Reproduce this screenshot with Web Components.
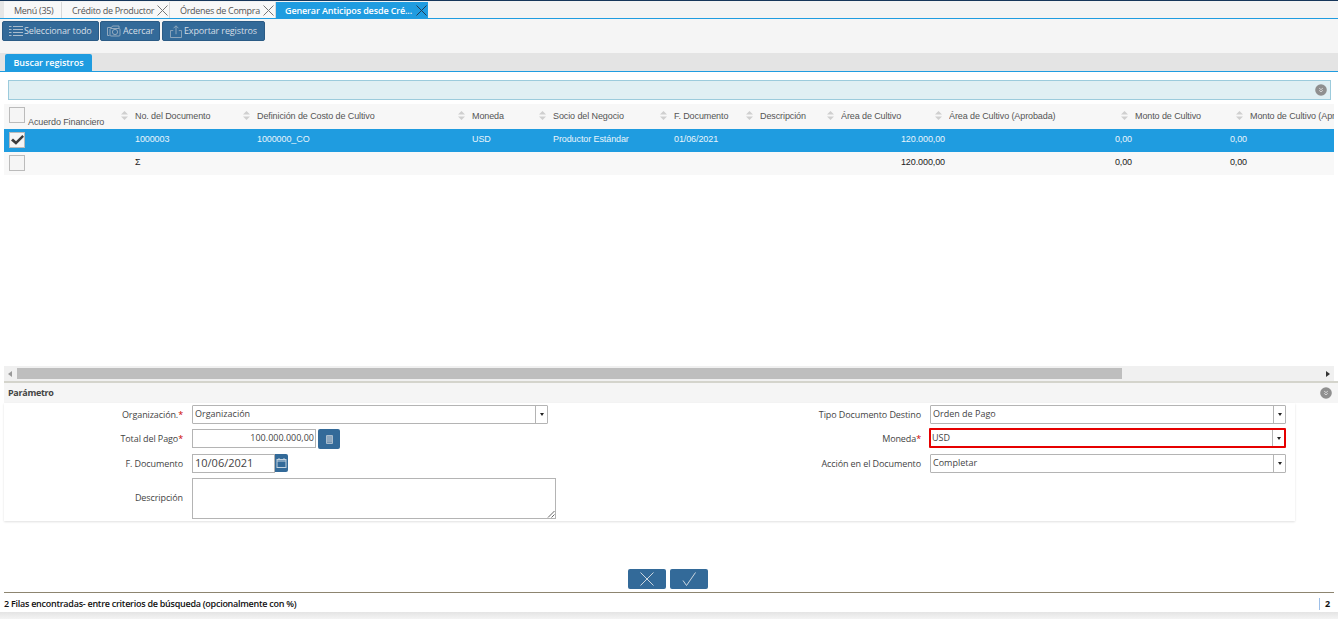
<!DOCTYPE html>
<html lang="es">
<head>
<meta charset="utf-8">
<title>Generar Anticipos</title>
<style>
  html, body { margin: 0; height: 100%; overflow: hidden; background: #fff; }
  body { font-family: "Open Sans", "Liberation Sans", sans-serif; font-size: 9px; color: #333; }
</style>
</head>
<body>
<app-shell>
  <tab-bar>
    <app-tab style="--w:58px">Menú (35)</app-tab>
    <app-tab closable style="--w:108px">Crédito de Productor</app-tab>
    <app-tab closable style="--w:106px">Órdenes de Compra</app-tab>
    <app-tab closable active style="--w:152px">Generar Anticipos desde Cré...</app-tab>
  </tab-bar>
  <tool-bar>
    <tool-button icon="list" style="--w:97px">Seleccionar todo</tool-button>
    <tool-button icon="zoom" style="--w:60px">Acercar</tool-button>
    <tool-button icon="export" style="--w:103px">Exportar registros</tool-button>
  </tool-bar>
  <sub-tabs>Buscar registros</sub-tabs>
  <info-bar></info-bar>
  <data-grid></data-grid>
  <grid-scroll></grid-scroll>
  <param-panel>
    <form-field label="Organización." required style="--lw:179px"><combo-box value="Organización" style="--fw:356px"></combo-box></form-field>
    <form-field label="Tipo Documento Destino" style="--lw:281px"><combo-box value="Orden de Pago" style="--fw:356px"></combo-box></form-field>
    <form-field label="Total del Pago" required style="--lw:179px"><number-box value="100.000.000,00"></number-box></form-field>
    <form-field label="Moneda" required style="--lw:281px"><combo-box value="USD" error style="--fw:356px"></combo-box></form-field>
    <form-field label="F. Documento" style="--lw:179px"><date-box value="10/06/2021"></date-box></form-field>
    <form-field label="Acción en el Documento" style="--lw:281px"><combo-box value="Completar" style="--fw:356px"></combo-box></form-field>
    <form-field label="Descripción" tall style="--lw:179px"><memo-box></memo-box></form-field>
  </param-panel>
  <action-bar></action-bar>
  <status-bar count="2">2 Filas encontradas- entre criterios de búsqueda (opcionalmente con %)</status-bar>
</app-shell>

<script>
const FONT = `"Open Sans", "Liberation Sans", sans-serif`;
const GRID_FONT = `"Liberation Sans", Arial, sans-serif`;

function define(name, css, html) {
  customElements.define(name, class extends HTMLElement {
    constructor() {
      super();
      this.attachShadow({ mode: "open" });
    }
    connectedCallback() {
      const body = typeof html === "function" ? html(this) : html;
      this.shadowRoot.innerHTML = `<style>${css}</style>${body}`;
    }
  });
}

const closeIcon = `<svg width="11" height="11" viewBox="0 0 11 11"><path d="M.5.5l10 10M10.500.5l-10 10" stroke="currentColor" fill="none"/></svg>`;
const collapseDot = `<svg width="12" height="12" viewBox="0 0 12 12"><circle cx="6" cy="6" r="5.800" fill="#8f8f8f"/><path d="M4.200 4.200L6 5.600l1.800-1.400M4.200 6.400L6 7.800l1.800-1.400" stroke="#d8d8d8" fill="none"/></svg>`;

define("app-shell", `
  :host { display: flex; flex-direction: column; height: 619px; width: 1338px; overflow: hidden; border-top: 1px solid #16365a; box-sizing: border-box; }
`, `<slot></slot>`);

define("tab-bar", `
  :host { display: flex; padding: 1px 0 0 4px; box-sizing: border-box; background: #f3f3f3; border-bottom: 1px solid #1f9ce0; height: 18px; flex: none; box-shadow: inset 4px 0 0 #e6e6e6; }
`, `<slot></slot>`);

define("app-tab", `
  :host { display: flex; align-items: center; width: var(--w); box-sizing: border-box; padding: 0 1px 0 10px; justify-content: space-between; background: #f8f8f8; border-right: 1px solid #d8d8d8; color: #555; font: 9px ${FONT}; letter-spacing: -.3px; white-space: nowrap; }
  :host([active]) { background: #1f9ce0; color: #fff; font-weight: 600; border-right: 0; padding-left: 9px; letter-spacing: -.13px; }
  svg { display: block; color: #777; }
  :host([active]) svg { color: #223c55; }
`, el => `<span><slot></slot></span>${el.hasAttribute("closable") ? closeIcon : ""}`);

define("tool-bar", `
  :host { display: flex; gap: 1px; height: 34px; box-sizing: border-box; padding: 2px 0 0 2px; background: #f5f5f5; flex: none; }
  ::slotted(:last-child) { margin-left: 1px; }
`, `<slot></slot>`);

const toolIcons = {
  list: `<svg width="14" height="12" viewBox="0 0 14 12" fill="none" stroke="#a9bccd"><path d="M4 1.500h10M4 4.500h10M4 7.500h10M4 10.500h10M0 1.500h2.500M0 4.500h2.500M0 7.500h2.500M0 10.500h2.500"/></svg>`,
  zoom: `<svg width="14" height="12" viewBox="0 0 14 12" fill="none" stroke="#92a9be"><path d="M.5 10.500V2.500h4l1-1.500h6.500v2M.5 10.500h2"/><rect x="3" y="3.500" width="10" height="7.500" rx="1"/><circle cx="8" cy="7" r="2.600"/></svg>`,
  export: `<svg width="12" height="13" viewBox="0 0 13 14" fill="none" stroke="#92a9be"><path d="M3.500 6H.5v7.500h12V6h-3M6.500 10V1M3.800 3.500L6.500.8l2.700 2.700"/></svg>`
};

define("tool-button", `
  :host { display: flex; align-items: center; gap: 1px; width: var(--w); height: 20px; box-sizing: border-box; padding-left: 6px; border-radius: 2px; background: #336a99; border: 1px solid #2b5b85; color: #d5dee6; font: 9px ${FONT}; letter-spacing: -.13px; white-space: nowrap; }
  :host([icon="zoom"]) { gap: 2px; }
  :host([icon="export"]) { gap: 2px; padding-left: 7px; }
  span { position: relative; top: -1px; }
  svg { display: block; flex: none; }
`, el => `${toolIcons[el.getAttribute("icon")]}<span><slot></slot></span>`);

define("sub-tabs", `
  :host { display: flex; height: 19px; padding: 1px 0 0 5px; box-sizing: border-box; background: #e4e4e4; border-bottom: 1px solid #1f9ce0; flex: none; }
  span { display: flex; align-items: center; justify-content: center; width: 87px; background: #1f9ce0; color: #fff; font: 600 9px ${FONT}; border-radius: 2px 2px 0 0; }
`, `<span><slot></slot></span>`);

define("info-bar", `
  :host { display: flex; align-items: center; justify-content: flex-end; height: 20px; margin: 8px 7px 4px 8px; padding-right: 3px; box-sizing: border-box; background: #e0eff3; border: 1px solid #9ccbdc; flex: none; }
  svg { display: block; }
`, collapseDot);

const COLS = [131, 122, 215, 81, 121, 86, 81, 108, 186, 115, 84];
const HEADS = ["Acuerdo Financiero", "No. del Documento", "Definición de Costo de Cultivo", "Moneda", "Socio del Negocio", "F. Documento", "Descripción", "Área de Cultivo", "Área de Cultivo (Aprobada)", "Monto de Cultivo", "Monto de Cultivo (Aprobado)"];
const ROWS = [
  ["", "1000003", "1000000_CO", "USD", "Productor Estándar", "01/06/2021", "", "120.000,00", "0,00", "0,00", ""],
  ["", "Σ", "", "", "", "", "", "120.000,00", "0,00", "0,00", ""]
];
const NUM_FROM = 7;
const sortIcon = `<svg class="sort" width="7" height="9" viewBox="0 0 7 9"><path d="M3.500 0L7 3.500H0zM3.500 9L0 5.500h7z" fill="#cfcfcf"/></svg>`;
const checkMark = `<svg width="16" height="16" viewBox="0 0 16 16"><path d="M2 8.500l2-2 3 2.800L13.300 3l1.700 1.800-8 8z" fill="#3b3b3b"/></svg>`;

define("data-grid", `
  :host { display: block; margin: 0 4px; height: 262px; overflow: hidden; flex: none; font: 9px ${GRID_FONT}; letter-spacing: -.1px; }
  .row { display: grid; grid-template-columns: ${COLS.map(c => c + "px").join(" ")}; align-items: center; width: max-content; }
  .head { height: 25px; background: #f7f7f7; color: #555; }
  .head div { display: flex; align-items: center; justify-content: space-between; padding-right: 7px; padding-bottom: 2px; box-sizing: border-box; height: 100%; white-space: nowrap; overflow: hidden; }
  .head div:last-child { overflow: visible; padding-right: 0; }
  .head .first { position: relative; }
  .head .first b { font-weight: 400; position: absolute; left: 24px; top: 13px; }
  .head .first .box { position: absolute; left: 5px; top: 3px; margin: 0; }
  .head .first .sort { position: absolute; right: 7px; top: 7px; }
  .sel, .foot { height: 23px; }
  .sel { background: #1f9ce0; color: #e8f4fb; }
  .foot { background: #f8f8f8; color: #222; }
  .num { text-align: right; padding-right: 3px; }
  .num.wide { padding-right: 4px; }
  .cell { white-space: nowrap; padding-bottom: 3px; }
  .foot .cell { padding-bottom: 4px; }
  .box { display: block; width: 16px; height: 16px; box-sizing: border-box; border: 1px solid #bbb; background: #f5f5f5; margin: 0 0 1px 5px; }
  .box svg { display: block; margin: -1px; }
`, () => {
  const head = HEADS.map((h, i) => i === 0
    ? `<div class="first"><span class="box"></span><b>${h}</b>${sortIcon}</div>`
    : `<div><span>${h}</span>${i < HEADS.length - 1 ? sortIcon : ""}</div>`).join("");
  const row = (cells, cls, checked) => `<div class="row ${cls}">` + cells.map((c, i) => {
    if (i === 0) return `<span class="box">${checked ? checkMark : ""}</span>`;
    return `<span class="cell ${i >= NUM_FROM ? (i === NUM_FROM ? "num wide" : "num") : ""}">${c}</span>`;
  }).join("") + `</div>`;
  return `<div class="row head">${head}</div>${row(ROWS[0], "sel", true)}${row(ROWS[1], "foot", false)}`;
});

define("grid-scroll", `
  :host { display: flex; align-items: center; height: 15px; margin-left: 4px; margin-right: 4px; background: #f0f0f0; flex: none; }
  i { display: block; width: 0; height: 0; border: 3.500px solid transparent; flex: none; }
  .l { border-right: 4px solid #999; border-left: 0; margin: 0 5px 0 4px; }
  .r { border-left: 4px solid #333; border-right: 0; margin: 0 4px 0 auto; }
  .t { width: 1105px; height: 11px; background: #bebebe; flex: none; }
`, `<i class="l"></i><div class="t"></div><i class="r"></i>`);

define("param-panel", `
  :host { display: block; margin-left: 4px; flex: none; }
  header { display: flex; align-items: center; justify-content: space-between; height: 22px; box-sizing: border-box; padding: 0 6px 0 4px; background: #f5f5f5; border-top: 2px solid #d4d4cc; color: #444; font: 700 9px ${FONT}; letter-spacing: -.3px; }
  header span { position: relative; top: -1px; }
  svg { display: block; }
  .body { display: grid; grid-template-columns: 636px 655px; grid-template-rows: 24px 25px 24px 43px; width: 1291px; padding-top: 2px; box-sizing: border-box; box-shadow: 0 1px 2px rgba(0,0,0,.12); }
`, `<header><span>Parámetro</span>${collapseDot}</header><div class="body"><slot></slot></div>`);

define("form-field", `
  :host { display: flex; align-items: flex-start; gap: 9px; color: #444; font: 9px ${FONT}; letter-spacing: -.1px; }
  label { width: var(--lw); flex: none; text-align: right; line-height: 19px; white-space: nowrap; box-sizing: border-box; }
  :host([tall]) label { line-height: 39px; }
  em { color: #c00; font-style: normal; }
`, el => `<label>${el.getAttribute("label")}${el.hasAttribute("required") ? "<em>*</em>" : ""}</label><slot></slot>`);

define("combo-box", `
  :host { display: flex; width: var(--fw); height: 19px; box-sizing: border-box; background: #fff; border: 1px solid #b4b4b4; border-radius: 1px; color: #444; font: 9px ${FONT}; letter-spacing: 0; }
  :host([error]) { border: 2px solid #e60000; margin: -1px 0 0 -1px; width: calc(var(--fw) + 1px); height: 20px; }
  span { flex: 1; padding-left: 2px; line-height: 15px; }
  :host([error]) span { padding-left: 1px; }
  b { display: flex; align-items: center; justify-content: center; width: 11px; border-left: 1px solid #b4b4b4; }
  b::after { content: ""; border: 2.500px solid transparent; border-top: 3px solid #222; border-bottom: 0; }
`, el => `<span>${el.getAttribute("value")}</span><b></b>`);

define("number-box", `
  :host { display: flex; gap: 2px; height: 20px; font: 9px ${FONT}; color: #444; letter-spacing: 0; }
  span { width: 124px; height: 19px; box-sizing: border-box; border: 1px solid #b4b4b4; text-align: right; padding-right: 1px; line-height: 16px; }
  b { display: flex; align-items: center; justify-content: center; width: 22px; height: 20px; background: #336a99; border-radius: 2px; }
  svg { display: block; }
`, el => `<span>${el.getAttribute("value")}</span><b><svg width="7" height="9" viewBox="0 0 7 9"><rect width="7" height="9" rx="1" fill="#a9bccd"/><path d="M1 2h5M1 4h5M1 6h5M1 7.500h5" stroke="#5d83a5" stroke-width=".7"/></svg></b>`);

define("date-box", `
  :host { display: flex; height: 19px; font: 11px ${FONT}; color: #444; letter-spacing: 0; }
  span { width: 83px; height: 19px; box-sizing: border-box; border: 1px solid #b4b4b4; padding-left: 2px; line-height: 16px; }
  b { display: flex; align-items: center; justify-content: center; width: 13px; height: 18px; background: #336a99; border-radius: 0 2px 2px 0; }
  svg { display: block; }
`, el => `<span>${el.getAttribute("value")}</span><b><svg width="11" height="10" viewBox="0 0 11 10" fill="none" stroke="#c3d2df"><rect x="1" y="1.500" width="9" height="8"/><path d="M1 3h9M3 0v2M8 0v2"/></svg></b>`);

define("memo-box", `
  :host { display: block; position: relative; width: 364px; height: 41px; box-sizing: border-box; border: 1px solid #b4b4b4; background: #fff; }
  svg { position: absolute; right: 0; bottom: 0; display: block; }
`, `<svg width="8" height="8" viewBox="0 0 8 8"><path d="M1 7.500L7.500 1M4.500 7.500l3-3" stroke="#666" fill="none"/></svg>`);

define("action-bar", `
  :host { display: flex; justify-content: center; gap: 4px; margin-top: 48px; padding-right: 2px; flex: none; }
  b { display: flex; align-items: center; justify-content: center; width: 38px; height: 20px; background: #336a99; border-radius: 2px; }
  svg { display: block; }
`, `<b><svg width="14" height="14" viewBox="0 0 14 14"><path d="M.5.5l13 13M13.500.5l-13 13" stroke="#cbd6e0" fill="none"/></svg></b><b><svg width="14" height="14" viewBox="0 0 14 14"><path d="M1 8.500l3.500 5L13.500.5" stroke="#cbd6e0" fill="none"/></svg></b>`);

define("status-bar", `
  :host { display: flex; align-items: center; justify-content: space-between; height: 20px; margin: 3px 4px 0; box-sizing: border-box; border-top: 1px solid #8d8570; color: #111; font: 600 9px ${FONT}; letter-spacing: -.26px; flex: none; position: relative; }
  :host::after { content: ""; position: absolute; left: -4px; right: -4px; top: 19px; height: 8px; background: linear-gradient(#e4e4e4, #f6f6f6); }
  span { position: relative; top: 1px; }
  .c { display: block; border-left: 1px solid #9dbfe8; line-height: 12px; padding: 0 4px 0 5px; font-weight: 700; }
`, el => `<span><slot></slot></span><span class="c">${el.getAttribute("count")}</span>`);
</script>
</body>
</html>
